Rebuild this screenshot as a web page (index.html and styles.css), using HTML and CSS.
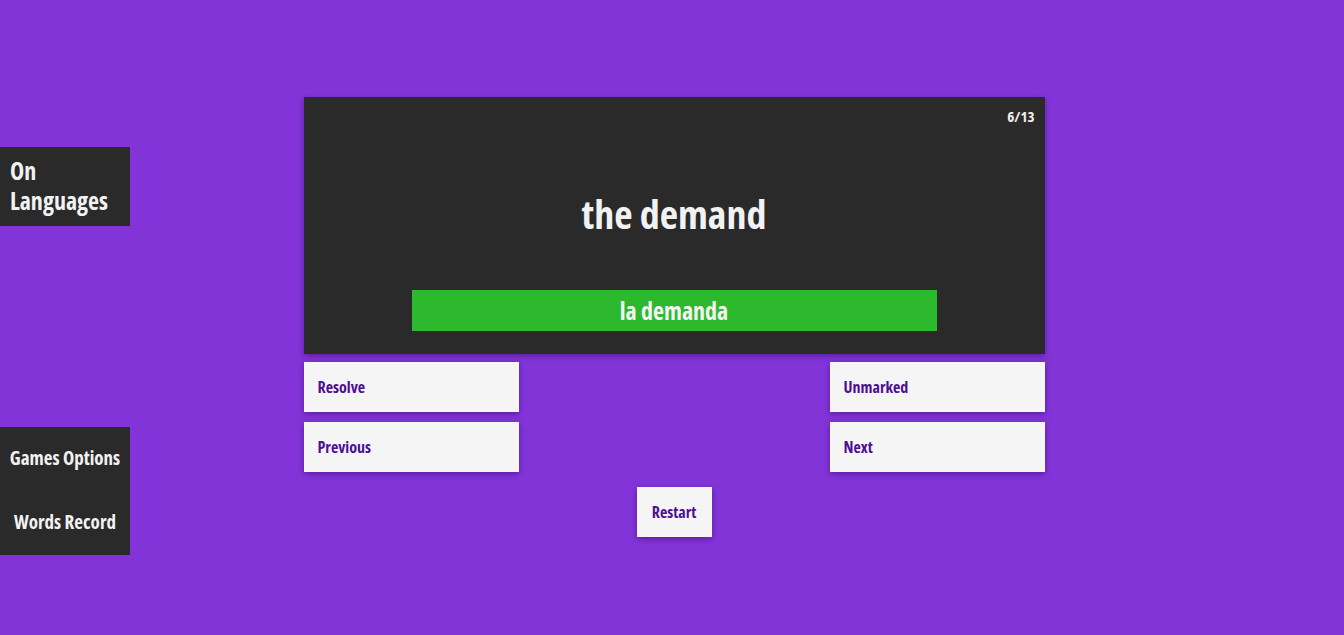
FILE: index.html
```html
<!DOCTYPE html>
<html lang="en">
<head>
<meta charset="utf-8">
<title>On Languages</title>
<link rel="stylesheet" href="styles.css">
</head>
<body>
<nav class="side">
  <div class="side-box brand">On<br>Languages</div>
  <div class="side-box menu">
    <a class="menu-item">Games Options</a>
    <a class="menu-item">Words Record</a>
  </div>
</nav>
<main class="main">
  <section class="card">
    <div class="counter">6/13</div>
    <h1 class="word">the demand</h1>
    <div class="answer">la demanda</div>
  </section>
  <div class="row">
    <button class="btn wide">Resolve</button>
    <button class="btn wide">Unmarked</button>
  </div>
  <div class="row">
    <button class="btn wide">Previous</button>
    <button class="btn wide">Next</button>
  </div>
  <div class="row center">
    <button class="btn small">Restart</button>
  </div>
</main>
</body>
</html>
```
FILE: styles.css
```css
html, body {
  margin: 0;
  padding: 0;
}
body {
  background: #8334d9;
  font-family: "Open Sans", sans-serif;
  font-stretch: 75%;
  height: 635px;
  overflow: hidden;
}
.side {
  position: fixed;
  left: 0;
  top: 147px;
  width: 130px;
  display: flex;
  flex-direction: column;
  gap: 201px;
}
.side-box {
  background: #2a2a2a;
  color: #f2f2f2;
}
.brand {
  font-size: 24px;
  font-weight: bold;
  line-height: 30px;
  padding: 9px 10px 10px;
  white-space: nowrap;
}
.menu {
  display: flex;
  flex-direction: column;
  align-items: center;
  padding: 18px 0 20px;
  gap: 38px;
}
.menu-item {
  font-size: 19px;
  font-weight: bold;
  line-height: 26px;
  white-space: nowrap;
}
.main {
  width: 741px;
  margin: 0 auto;
  padding-top: 97px;
  position: relative;
  left: 2px;
  display: flex;
  flex-direction: column;
}
.card {
  background: #2a2a2a;
  height: 257px;
  box-shadow: 0 2px 6px rgba(40, 0, 80, 0.45);
  display: flex;
  flex-direction: column;
  align-items: center;
}
.counter {
  align-self: flex-end;
  color: #eeeeee;
  font-size: 15px;
  font-weight: bold;
  padding: 9px 10px 0 0;
  line-height: 20px;
}
.word {
  margin: 65px 0 0;
  color: #f2f2f2;
  font-size: 40px;
  font-weight: bold;
  line-height: 46px;
}
.answer {
  margin-top: 53px;
  width: 525px;
  height: 41px;
  background: #2db92e;
  color: #f4f4f4;
  font-size: 24px;
  font-weight: bold;
  display: flex;
  align-items: center;
  justify-content: center;
}
.row {
  display: flex;
  justify-content: space-between;
  margin-top: 8px;
}
.row + .row {
  margin-top: 10px;
}
.row.center {
  justify-content: center;
  margin-top: 15px;
}
.btn {
  background: #f5f5f5;
  border: none;
  color: #4e0f92;
  font-family: inherit;
  font-stretch: inherit;
  font-size: 16px;
  font-weight: bold;
  height: 50px;
  box-shadow: 0 2px 6px rgba(40, 0, 80, 0.45);
  cursor: pointer;
}
.btn.wide {
  width: 215px;
  text-align: left;
  padding: 0 14px;
}
.btn.small {
  width: 75px;
  padding: 0;
  text-align: center;
}
```
